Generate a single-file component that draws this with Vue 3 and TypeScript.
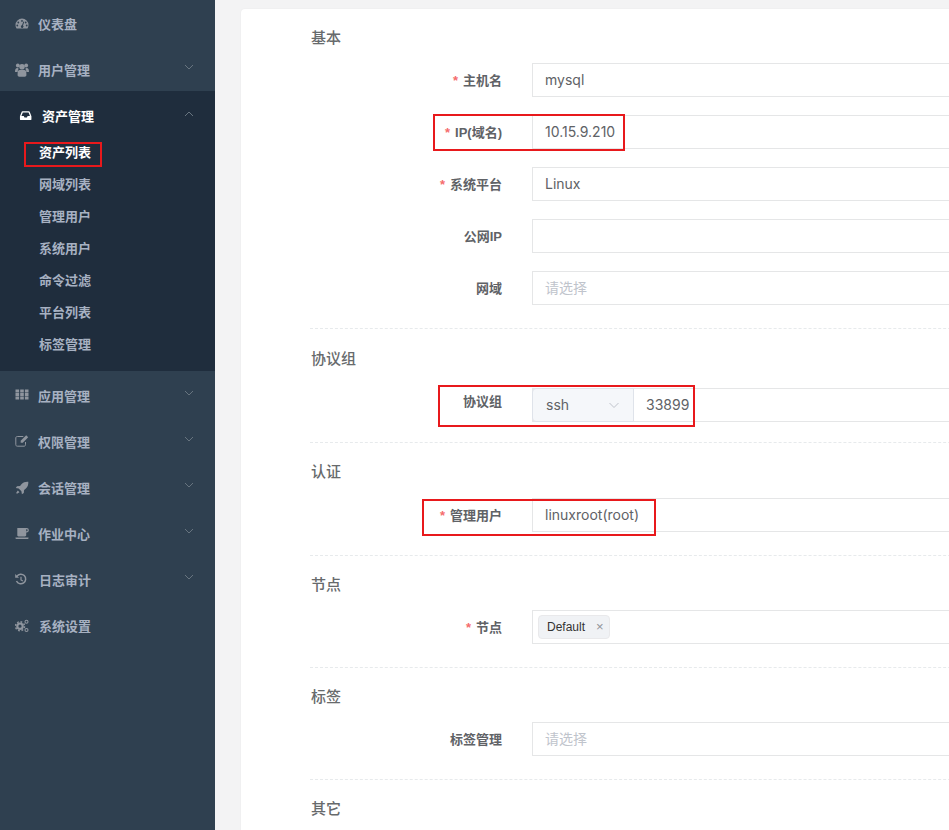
<script setup lang="ts">
interface Item { label: string; icon: string; chevron: boolean }
const before: Item[] = [
  { label: '仪表盘', icon: 'gauge', chevron: false },
  { label: '用户管理', icon: 'users', chevron: true },
]
const after: Item[] = [
  { label: '应用管理', icon: 'grid', chevron: true },
  { label: '权限管理', icon: 'edit', chevron: true },
  { label: '会话管理', icon: 'rocket', chevron: true },
  { label: '作业中心', icon: 'coffee', chevron: true },
  { label: '日志审计', icon: 'history', chevron: true },
  { label: '系统设置', icon: 'cogs', chevron: false },
]
const subs = ['资产列表', '网域列表', '管理用户', '系统用户', '命令过滤', '平台列表', '标签管理']
</script>

<template>
  <div class="page">
    <aside class="side">
      <div v-for="it in before" :key="it.label" class="item">
        <span class="ico"><svg width="14" height="14" viewBox="0 0 14 14"><use :href="'#i-' + it.icon" /></svg></span>
        <span class="txt">{{ it.label }}</span>
        <svg v-if="it.chevron" class="chev" width="10" height="6" viewBox="0 0 10 6"><path d="M1 1l4 4 4-4" fill="none" stroke="currentColor" stroke-width="1" /></svg>
      </div>
      <div class="group">
        <div class="item head">
          <span class="ico"><svg width="14" height="14" viewBox="0 0 14 14"><use href="#i-inbox" /></svg></span>
          <span class="txt">资产管理</span>
          <svg class="chev" width="10" height="6" viewBox="0 0 10 6"><path d="M1 5l4-4 4 4" fill="none" stroke="currentColor" stroke-width="1" /></svg>
        </div>
        <div v-for="(s, i) in subs" :key="s" class="sub" :class="{ on: i === 0 }">{{ s }}</div>
      </div>
      <div v-for="it in after" :key="it.label" class="item">
        <span class="ico"><svg width="14" height="14" viewBox="0 0 14 14"><use :href="'#i-' + it.icon" /></svg></span>
        <span class="txt" :class="{ nudge: it.icon === 'history' || it.icon === 'cogs' }">{{ it.label }}</span>
        <svg v-if="it.chevron" class="chev" width="10" height="6" viewBox="0 0 10 6"><path d="M1 1l4 4 4-4" fill="none" stroke="currentColor" stroke-width="1" /></svg>
      </div>
      <svg class="defs" width="0" height="0">
        <defs>
          <g id="i-gauge" fill="currentColor"><path fill-rule="evenodd" d="M7 1.500A6.500 6.500 0 0 0 .5 8c0 1.200.3 2.300.9 3.200.1.2.3.3.5.3h10.200c.2 0 .4-.1.5-.3.6-.9.9-2 .9-3.200A6.500 6.500 0 0 0 7 1.500zM7 3a.9.9 0 1 1 0 1.800A.9.9 0 0 1 7 3zM3.300 4.600a.9.9 0 1 1 0 1.800.9.9 0 0 1 0-1.800zm7.400 0a.9.9 0 1 1 0 1.800.9.9 0 0 1 0-1.800zM2.300 7.600a.9.9 0 1 1 0 1.800.9.9 0 0 1 0-1.800zm9.400 0a.9.9 0 1 1 0 1.800.9.9 0 0 1 0-1.800zM9.300 4.800 8 8.600a1.300 1.300 0 1 1-1-.3l1.400-3.800z" /></g>
          <g id="i-users" fill="currentColor"><circle cx="2.800" cy="2.500" r="1.900" /><circle cx="11.200" cy="2.500" r="1.900" /><circle cx="7" cy="3.800" r="2.800" /><path d="M0 8.800c0-2.300.7-3.800 2.300-3.800.7 0 1.100.3 1.400.7-.7.8-1.100 1.900-1.100 3.300H.8C.3 9 0 9 0 8.800zM14 8.800c0-2.300-.7-3.800-2.300-3.800-.7 0-1.100.3-1.400.7.7.8 1.100 1.900 1.100 3.300h1.800c.5 0 .8 0 .8-.2zM4.600 7h4.800c1.400 0 2 1.600 2 4v1c0 1-.7 1.700-1.700 1.700H4.300c-1 0-1.700-.7-1.700-1.700v-1c0-2.400.6-4 2-4z" /></g>
          <g id="i-inbox" fill="currentColor" transform="translate(.6 .6) scale(.87)"><path fill-rule="evenodd" d="M3.300 2h7.400c.4 0 .7.2.9.6l1.900 4.700c.1.2.1.4.1.6v3.100c0 .6-.4 1-1 1H1.400c-.6 0-1-.4-1-1V7.900c0-.2 0-.4.1-.6l1.900-4.700c.2-.4.5-.6.9-.6zM3.700 3.400 2.100 7.400h2.700l.8 1.600h2.800l.8-1.600h2.700l-1.600-4z" /></g>
          <g id="i-grid" fill="currentColor" transform="translate(0 -1.500)"><path d="M.5 2h3.600v2.900H.5zM5.200 2h3.600v2.900H5.200zM9.900 2h3.600v2.900H9.900zM.5 5.500h3.600v2.900H.5zM5.200 5.500h3.600v2.900H5.200zM9.900 5.500h3.600v2.900H9.900zM.5 9h3.600v2.900H.5zM5.200 9h3.600v2.900H5.200zM9.900 9h3.600v2.900H9.900z" /></g>
          <g id="i-edit" transform="translate(0 -1)"><path d="M10.500 8v2.700c0 .9-.6 1.500-1.500 1.500H2.300c-.9 0-1.500-.6-1.500-1.500V4c0-.9.6-1.500 1.500-1.500h6" fill="none" stroke="currentColor" stroke-width="1" /><path fill="currentColor" d="M11.200 1.300 13.200 3.200 7.800 8.700H5.700V6.700z" /></g>
          <g id="i-rocket" fill="currentColor"><path d="M13.300.7c.2 2.700-.5 5-2.200 6.600-.7.7-1.400 1.200-2 1.600L8.800 12 6.900 13.200l-.5-2.900-2.700-2.700-2.900-.5L2 5.200l3.100-.3c.4-.6.9-1.300 1.600-2C8.300 1.200 10.600.5 13.300.7z" /><path d="M2.800 9.500l1.700 1.700-2.500 1.500-.9-.7z" /></g>
          <g id="i-coffee" fill="currentColor"><path fill-rule="evenodd" d="M2.300 1h9.400c1.300 0 2.100.8 2.100 2.200s-.8 2.200-2.100 2.200h-.5v2.900c0 .7-.5 1.200-1.200 1.200H3.500c-.7 0-1.200-.5-1.200-1.200zM11.200 2.200v2h.4c.6 0 1-.4 1-1s-.4-1-1-1z" /><path d="M.5 10.600h13v.7c0 .4-.3.700-.7.700H1.200c-.4 0-.7-.3-.7-.7z" /></g>
          <g id="i-history"><path d="M1.900 3.300A4.800 4.800 0 1 1 1.500 8" fill="none" stroke="currentColor" stroke-width="1.500" /><path fill="currentColor" d="M.2 1V4.800H4z" /><path d="M6 3.800v3.100l1.900 1.100" fill="none" stroke="currentColor" stroke-width="1.200" /></g>
          <g id="i-cogs" fill="none" stroke="currentColor"><circle cx="5" cy="7.200" r="2.700" stroke-width="2.200" /><circle cx="5" cy="7.200" r="4.500" stroke-width="1.500" stroke-dasharray="1.800 1.730" /><circle cx="11.500" cy="2.700" r="1.500" stroke-width="1.100" /><circle cx="11.500" cy="11" r="1.500" stroke-width="1.100" /></g>
        </defs>
      </svg>
    </aside>

    <main class="main">
      <div class="card">
        <h3 class="title">基本</h3>
        <div class="row"><label class="lab"><i>*</i>主机名</label><div class="inp">mysql</div></div>
        <div class="row"><label class="lab"><i>*</i>IP(域名)</label><div class="inp">10.15.9.210</div></div>
        <div class="row"><label class="lab"><i>*</i>系统平台</label><div class="inp">Linux</div></div>
        <div class="row"><label class="lab">公网IP</label><div class="inp"></div></div>
        <div class="row"><label class="lab">网域</label><div class="inp ph">请选择</div></div>
        <div class="dash"></div>

        <h3 class="title t-wide">协议组</h3>
        <div class="row r-tight">
          <label class="lab up">协议组</label>
          <div class="combo">
            <div class="sel">ssh<svg width="12" height="7" viewBox="0 0 12 7"><path d="M1.500 1l4.500 4.500L10.500 1" fill="none" stroke="#c0c4cc" stroke-width="1" /></svg></div>
            <div class="port">33899</div>
          </div>
        </div>
        <div class="dash"></div>

        <h3 class="title t-low">认证</h3>
        <div class="row"><label class="lab"><i>*</i>管理用户</label><div class="inp">linuxroot(root)</div></div>
        <div class="dash"></div>

        <h3 class="title">节点</h3>
        <div class="row">
          <label class="lab"><i>*</i>节点</label>
          <div class="inp tags"><span class="tag">Default<b>×</b></span></div>
        </div>
        <div class="dash"></div>

        <h3 class="title">标签</h3>
        <div class="row"><label class="lab">标签管理</label><div class="inp ph">请选择</div></div>
        <div class="dash"></div>

        <h3 class="title">其它</h3>
      </div>
    </main>

    <div class="mark m1"></div>
    <div class="mark m2"></div>
    <div class="mark m3"></div>
    <div class="mark m4"></div>
  </div>
</template>

<style>
html, body { margin: 0; height: 100%; overflow: hidden; background: #f3f3f4; }
</style>

<style scoped>
.page {
  position: relative;
  display: flex;
  width: 949px;
  height: 830px;
  overflow: hidden;
  font-family: Inter, "Noto Sans CJK SC", sans-serif;
  color: #606266;
}
.side {
  width: 215px;
  flex: none;
  background: #2f4050;
  color: #a7b1c2;
  font-size: 13px;
  font-weight: 700;
}
.defs { position: absolute; }
.item {
  position: relative;
  display: flex;
  align-items: center;
  height: 46px;
  padding: 2px 0 0 15px;
  box-sizing: border-box;
}
.ico {
  width: 23px;
  flex: none;
  display: flex;
  color: #8f959e;
}
.txt { font-family: "Noto Sans CJK SC", sans-serif; line-height: 18px; }
.txt.nudge { margin-left: 1px; }
.chev {
  position: absolute;
  left: 184px;
  top: 18px;
  color: #67747f;
}
.group {
  margin: -1px 0 1px;
  padding-bottom: 11px;
  background: #1f2d3d;
}
.head {
  height: 45px;
  padding: 5px 0 0 19px;
  color: #fff;
}
.head .ico { color: #fff; }
.head .chev { top: 20px; }
.sub {
  height: 32px;
  line-height: 32px;
  padding-left: 39px;
  font-family: "Noto Sans CJK SC", sans-serif;
}
.sub.on { color: #fff; }

.main {
  flex: 1;
  min-width: 0;
  padding: 9px 0 0 26px;
}
.card {
  width: 760px;
  height: 860px;
  padding: 18px 0 0 69px;
  box-sizing: border-box;
  background: #fff;
  border-radius: 4px;
  box-shadow: 0 0 2px rgba(0, 0, 0, 0.06);
}
.title {
  margin: 0 0 16px;
  padding-left: 1px;
  height: 20px;
  font-size: 15px;
  line-height: 20px;
  font-weight: 500;
  color: #676a6c;
  font-family: "Noto Sans CJK SC", sans-serif;
}
.t-wide { margin: 19px 0 20px; }
.t-low { margin-bottom: 17px; }
.row {
  display: flex;
  align-items: center;
  margin-bottom: 18px;
}
.r-tight { margin-bottom: 20px; }
.lab {
  width: 192px;
  margin-right: 30px;
  padding-bottom: 2px;
  flex: none;
  text-align: right;
  font-size: 13px;
  font-weight: 700;
  color: #606266;
  font-family: "Liberation Sans", "Noto Sans CJK SC", sans-serif;
}
.lab.up { position: relative; top: -4px; }
.lab i {
  margin-right: 5px;
  color: #f56c6c;
  font-style: normal;
}
.inp, .combo {
  flex: 1;
  height: 34px;
  box-sizing: border-box;
  border: 1px solid #e5e6e7;
  font-size: 14px;
  line-height: 32px;
}
.inp { padding-left: 12px; }
.ph {
  color: #c0c4cc;
  line-height: 30px;
  font-family: "Noto Sans CJK SC", sans-serif;
}
.combo { display: flex; }
.sel {
  width: 102px;
  flex: none;
  box-sizing: border-box;
  display: flex;
  align-items: center;
  justify-content: space-between;
  padding: 0 13px;
  margin: -1px 0 -1px -1px;
  height: 34px;
  line-height: 34px;
  background: #f5f7fa;
  border: 1px solid #dfe3ea;
  border-radius: 4px 0 0 4px;
  font-size: 14px;
}
.port { padding-left: 12px; }
.tags {
  display: flex;
  align-items: center;
  padding-left: 5px;
}
.tag {
  display: flex;
  align-items: center;
  width: 72px;
  height: 24px;
  box-sizing: border-box;
  padding-left: 8px;
  background: #f0f2f5;
  border: 1px solid #e9e9eb;
  border-radius: 4px;
  color: #333;
  font-size: 12px;
  font-family: "Liberation Sans", sans-serif;
}
.tag b {
  margin-left: 11px;
  font-weight: 400;
  font-size: 13px;
  color: #909399;
}
.dash {
  margin: 23px 0 18px;
  border-top: 1px dashed #e7eaec;
}
.r-tight + .dash { margin-top: 0; }

.mark {
  position: absolute;
  box-sizing: border-box;
  border: 2px solid #e8191c;
}
.m1 { left: 24px; top: 142px; width: 78px; height: 25px; }
.m2 { left: 433px; top: 114px; width: 192px; height: 37px; }
.m3 { left: 438px; top: 385px; width: 257px; height: 42px; }
.m4 { left: 422px; top: 499px; width: 234px; height: 37px; }
</style>
